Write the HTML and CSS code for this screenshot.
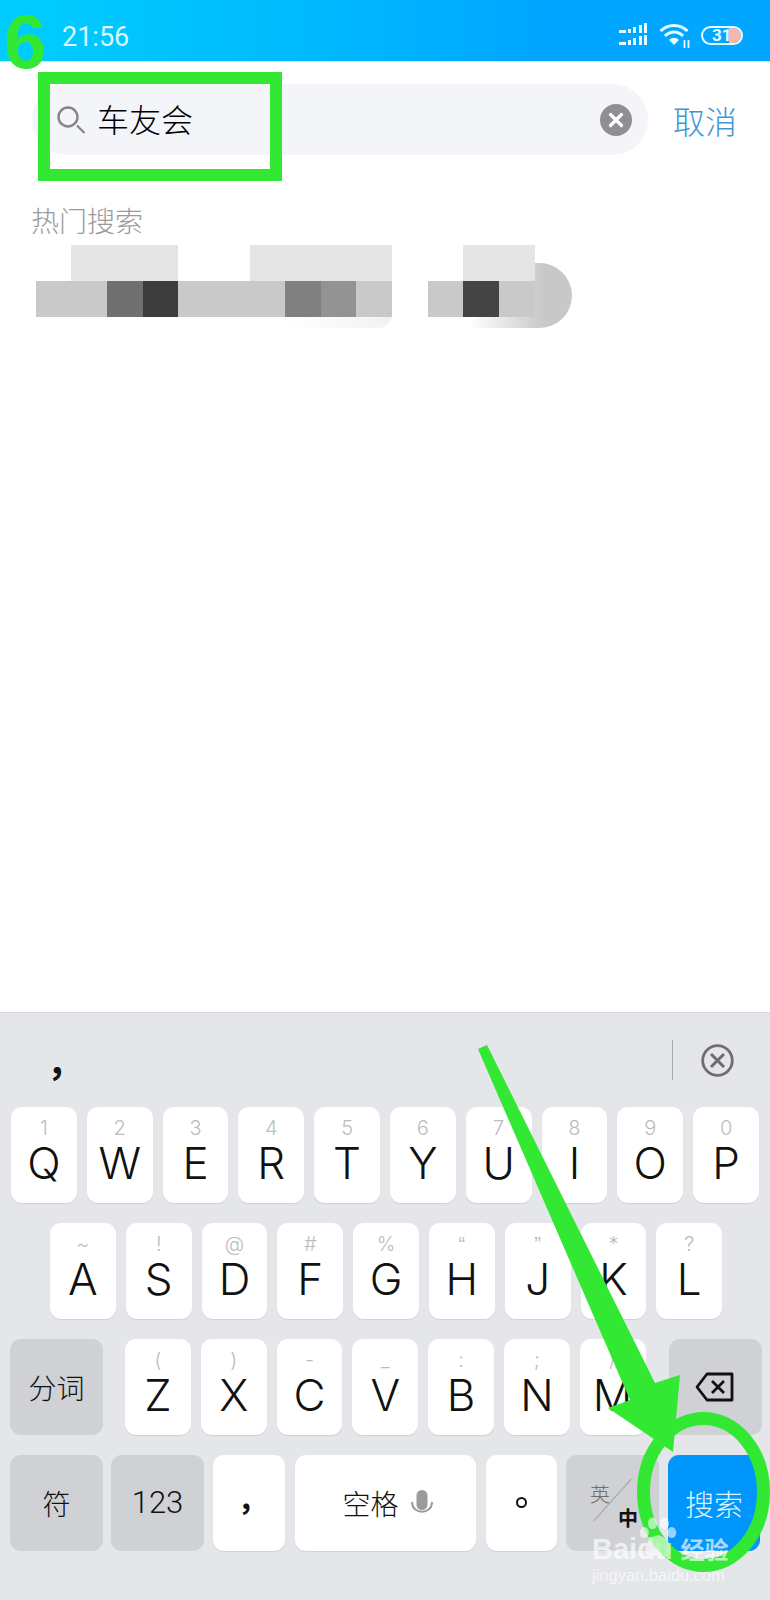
FILE: index.html
```html
<!DOCTYPE html>
<html>
	<head>
		<meta charset="utf-8">
		<meta name="viewport" content="width=device-width, initial-scale=1">
		<link rel="stylesheet" href="styles.css">
		<title>搜索</title>
	</head>
	<body>
		<div class="page">
			<div class="status">
				<span class="time">21:56</span>
				<div class="status-icons">
					<svg width="30" height="24" viewBox="0 0 30 24">
						<g fill="#e8fbff">
							<rect x="0" y="7" width="7" height="3"/><rect x="9" y="6" width="3" height="4"/><rect x="14" y="4" width="3" height="6"/><rect x="20" y="2" width="3" height="8"/><rect x="25" y="0" width="3" height="10"/>
							<rect x="0" y="19" width="7" height="3"/><rect x="9" y="17" width="3" height="5"/><rect x="14" y="15" width="3" height="7"/><rect x="20" y="13" width="3" height="9"/><rect x="25" y="12" width="3" height="10"/>
						</g>
					</svg>
					<svg class="wifi" width="32" height="26" viewBox="0 0 32 26">
						<g fill="none" stroke="#e8fbff" stroke-width="3">
							<path d="M1.500 9C9 1.500 21 1.500 28.500 9"/>
							<path d="M6 14C11 8.500 19 8.500 24 14"/>
						</g>
						<path d="M10 18C13 15 17 15 20 18L15 23Z" fill="#e8fbff"/>
						<path d="M25.500 18V26M29.500 18V26" stroke="#e8fbff" stroke-width="1.800"/>
					</svg>
					<div class="battery">
						<span class="battery-num">31</span>
						<span class="battery-fill"></span>
					</div>
				</div>
			</div>

			<div class="search-row">
				<div class="search-box">
					<svg class="search-ico" width="28" height="28" viewBox="0 0 28 28">
						<circle cx="11" cy="11" r="9.500" fill="none" stroke="#858585" stroke-width="2.400"/>
						<path d="M20 19.500L27.500 27" stroke="#858585" stroke-width="2.200"/>
					</svg>
					<span class="search-text">车友会</span>
					<svg class="clear-ico" width="32" height="32" viewBox="0 0 32 32">
						<circle cx="16" cy="16" r="16" fill="#8e8e93"/>
						<path d="M10.500 10.500L21.500 21.500M21.500 10.500L10.500 21.500" stroke="#fff" stroke-width="3.200" stroke-linecap="round"/>
					</svg>
				</div>
				<span class="cancel">取消</span>
			</div>

			<div class="hot-title">热门搜索</div>
			<div class="hot-area">
				<div class="hot-pill hot-pill-a"></div>
				<div class="hot-pill hot-pill-b"></div>
				<div class="mosaic-row mosaic-top">
					<span class="m w35"></span>
					<span class="m w107 light"></span>
					<span class="m w72"></span>
					<span class="m w142 light"></span>
					<span class="m w71"></span>
					<span class="m w72 light"></span>
				</div>
				<div class="mosaic-row">
					<span class="m w71 mid"></span>
					<span class="m w36 d1"></span>
					<span class="m w35 d2"></span>
					<span class="m w107 mid"></span>
					<span class="m w36 d3"></span>
					<span class="m w35 d4"></span>
					<span class="m w36 mid"></span>
					<span class="m w36"></span>
					<span class="m w35 mid"></span>
					<span class="m w36 d5"></span>
					<span class="m w36 mid"></span>
				</div>
			</div>

			<div class="keyboard">
				<div class="candidates">
					<span class="cand">，</span>
					<span class="cand-line"></span>
					<svg class="cand-close" width="33" height="33" viewBox="0 0 33 33">
						<circle cx="16.500" cy="16.500" r="14.800" fill="none" stroke="#6e6e6e" stroke-width="2.800"/>
						<path d="M10 10L23 23M23 10L10 23" stroke="#6e6e6e" stroke-width="3"/>
					</svg>
				</div>
				<div class="keys">
					<div class="row">
						<div class="key"><i>1</i><b>Q</b></div>
						<div class="key"><i>2</i><b>W</b></div>
						<div class="key"><i>3</i><b>E</b></div>
						<div class="key"><i>4</i><b>R</b></div>
						<div class="key"><i>5</i><b>T</b></div>
						<div class="key"><i>6</i><b>Y</b></div>
						<div class="key"><i>7</i><b>U</b></div>
						<div class="key"><i>8</i><b>I</b></div>
						<div class="key"><i>9</i><b>O</b></div>
						<div class="key"><i>0</i><b>P</b></div>
					</div>
					<div class="row row-home">
						<div class="key"><i>~</i><b>A</b></div>
						<div class="key"><i>!</i><b>S</b></div>
						<div class="key"><i>@</i><b>D</b></div>
						<div class="key"><i>#</i><b>F</b></div>
						<div class="key"><i>%</i><b>G</b></div>
						<div class="key"><i class="q">“</i><b>H</b></div>
						<div class="key"><i class="q">”</i><b>J</b></div>
						<div class="key"><i>*</i><b>K</b></div>
						<div class="key"><i>?</i><b>L</b></div>
					</div>
					<div class="row row-shift">
						<div class="key fn wide shift-l"><span class="fn-text">分词</span></div>
						<div class="key"><i>(</i><b>Z</b></div>
						<div class="key"><i>)</i><b>X</b></div>
						<div class="key"><i>-</i><b>C</b></div>
						<div class="key"><i>_</i><b>V</b></div>
						<div class="key"><i>:</i><b>B</b></div>
						<div class="key"><i>;</i><b>N</b></div>
						<div class="key"><i>/</i><b>M</b></div>
						<div class="key fn wide shift-r">
							<svg width="40" height="30" viewBox="0 0 40 30">
								<path d="M12 2H37V28H12L2 15Z" fill="none" stroke="#111" stroke-width="2.800" stroke-linejoin="round"/>
								<path d="M17 9L29 21M29 9L17 21" stroke="#111" stroke-width="2.800"/>
							</svg>
						</div>
					</div>
					<div class="row row-bottom">
						<div class="key fn wide"><span class="fn-text">符</span></div>
						<div class="key fn wide key-123"><span class="fn-text num">123</span></div>
						<div class="key comma"><span class="punct">，</span></div>
						<div class="key space">
							<span class="fn-text">空格</span>
							<svg width="24" height="28" viewBox="0 0 24 28">
								<rect x="6.500" y="1" width="11" height="20" rx="5.500" fill="#9b9b9b"/>
								<path d="M2 13C2 26 22 26 22 13" fill="none" stroke="#9b9b9b" stroke-width="2"/>
							</svg>
						</div>
						<div class="key comma period"><span class="circle"></span></div>
						<div class="key fn wide lang">
							<span class="lang-en">英</span>
							<span class="lang-line"></span>
							<span class="lang-zh">中</span>
						</div>
						<div class="key go wide">搜索</div>
					</div>
				</div>
			</div>

			<!-- 截图上的标注 -->
			<span class="step">6</span>
			<div class="mark-box"></div>
			<svg class="marks" width="770" height="1600" viewBox="0 0 770 1600">
				<path d="M478 1049L487 1045L655 1383L680 1375L673 1452L608 1408L630 1400Z" fill="#33e833"/>
				<ellipse cx="703.500" cy="1492" rx="60" ry="73.500" fill="none" stroke="#33e833" stroke-width="13"/>
			</svg>
			<div class="wm">
				<svg class="wm-paw" width="40" height="42" viewBox="0 0 42 46">
					<g fill="#fff" fill-opacity=".9">
						<ellipse cx="6" cy="17" rx="5" ry="6"/>
						<ellipse cx="15" cy="7" rx="5" ry="6.500"/>
						<ellipse cx="28" cy="7" rx="5" ry="6.500"/>
						<ellipse cx="36" cy="17" rx="5" ry="6"/>
						<path d="M21 20C29 20 35 30 35 37C35 45 27 42 21 42C15 42 7 45 7 37C7 30 13 20 21 20Z"/>
					</g>
				</svg>
				<div class="wm-line"><span class="wm-bai">Bai</span><span class="wm-du">du</span><span class="wm-cn">经验</span></div>
				<div class="wm-url">jingyan.baidu.com</div>
			</div>
		</div>
	</body>
</html>
```

FILE: styles.css
```css
*{
	box-sizing: border-box;
}
html,body{
	margin: 0;
	padding: 0;
	background: #fff;
}
.page{
	position: relative;
	width: 770px;
	height: 1600px;
	overflow: hidden;
	display: flex;
	flex-direction: column;
	font-family: "Liberation Sans", "Noto Sans CJK SC", sans-serif;
}

/* status bar */
.status{
	height: 62px;
	flex: none;
	display: flex;
	align-items: center;
	justify-content: space-between;
	padding: 9px 27px 0 62px;
	background: linear-gradient(90deg, #00cdfe 0%, #00baff 40%, #00a6ff 70%, #00a6ff 100%);
	border-bottom: 1px solid #bfeaff;
}
.time{
	color: #d9f8ff;
	font-family: Roboto, sans-serif;
	font-size: 27px;
	margin-top: 3px;
}
.status-icons{
	display: flex;
	align-items: center;
	gap: 10px;
}
.battery{
	position: relative;
	width: 42px;
	height: 19px;
	border: 2px solid #e8fbff;
	border-radius: 10px;
	overflow: hidden;
	color: #e8fbff;
	font: bold 17px/15px Roboto, sans-serif;
}
.battery-num{
	display: block;
	padding-left: 9px;
}
.battery-fill{
	position: absolute;
	top: 0;
	right: 0;
	width: 12px;
	height: 15px;
	background: #f2b9ae;
}

/* search */
.search-row{
	display: flex;
	align-items: center;
	margin-top: 22px;
	padding-left: 32px;
	height: 71px;
	flex: none;
}
.search-box{
	width: 616px;
	height: 71px;
	display: flex;
	align-items: center;
	border-radius: 36px;
	background: #f4f5f9;
	padding: 0 16px 0 25px;
}
.search-text{
	margin-left: 12px;
	margin-top: -4px;
	font-size: 32px;
	font-weight: 300;
	color: #000;
	flex: 1;
}
.cancel{
	margin-left: 25px;
	font-size: 32px;
	font-weight: 300;
	color: #3f97d8;
}
.hot-title{
	margin-top: 53px;
	padding-left: 31px;
	font-size: 28px;
	font-weight: 300;
	line-height: 30px;
	color: #9a9a9e;
	flex: none;
}
.hot-area{
	position: relative;
	flex: none;
	height: 83px;
	margin-top: 7px;
	padding-left: 36px;
}
.hot-pill{
	position: absolute;
	top: 18px;
	height: 65px;
	border-radius: 0 33px 33px 0;
}
.hot-pill-a{
	left: 260px;
	width: 132px;
	background: linear-gradient(90deg, #fff 20%, #f2f2f2 100%);
	border-radius: 0 0 14px 0;
}
.hot-pill-b{
	left: 436px;
	width: 136px;
	background: linear-gradient(90deg, #fff 0%, #fff 25%, #c8c8c8 80%);
}
.mosaic-row{
	position: relative;
	display: flex;
	height: 36px;
}
.m{
	display: block;
	height: 36px;
}
.w35{ width: 35px; }
.w36{ width: 36px; }
.w71{ width: 71px; }
.w72{ width: 72px; }
.w107{ width: 107px; }
.w142{ width: 142px; }
.light{ background: #e5e5e5; }
.mid{ background: #c9c9c9; }
.d1{ background: #707070; }
.d2{ background: #3c3c3c; }
.d3{ background: #808080; }
.d4{ background: #939393; }
.d5{ background: #444; }

/* keyboard */
.keyboard{
	margin-top: auto;
	height: 588px;
	flex: none;
	background: #e4e6ea;
	border-top: 1px solid #d8dade;
}
.candidates{
	height: 94px;
	display: flex;
	align-items: center;
	position: relative;
}
.cand{
	margin-left: 47px;
	margin-top: 8px;
	font-size: 36px;
	font-weight: bold;
	color: #111;
	line-height: 40px;
}
.cand-line{
	width: 1px;
	height: 40px;
	margin-left: auto;
	background: #a9abae;
}
.cand-close{
	margin: 0 36px 0 28px;
}
.keys{
	display: flex;
	flex-direction: column;
	gap: 20.500px;
}
.row{
	display: flex;
	height: 95.500px;
	gap: 10px;
	padding-left: 11px;
}
.row-home{
	padding-left: 50px;
}
.row-shift{
	padding-left: 10px;
}
.row-bottom{
	padding-left: 10px;
	gap: 9px;
}
.key{
	position: relative;
	width: 65.800px;
	flex: none;
	background: #fff;
	border-radius: 11px;
	box-shadow: 0 1px 1px #cfd1d4;
	display: flex;
	flex-direction: column;
	align-items: center;
	color: #111;
}
.key i{
	font-style: normal;
	font-family: Inter, sans-serif;
	font-weight: 300;
	font-size: 20px;
	line-height: 20px;
	margin-top: 11px;
	color: #bcbcbc;
}
.key i.q{
	font-family: "Liberation Sans", sans-serif;
}
.key b{
	font-weight: 300;
	font-family: Inter, sans-serif;
	font-size: 44px;
	line-height: 46px;
	margin-top: 2px;
}
.fn{
	background: #cfd1d5;
	box-shadow: none;
}
.wide{
	width: 93px;
	justify-content: center;
}
.shift-l{
	margin-right: 12px;
}
.shift-r{
	margin-left: 13px;
}
.key-123{
	margin-left: -1px;
}
.fn-text{
	font-size: 28px;
	font-weight: 300;
	color: #111;
}
.num{
	font-family: Roboto, sans-serif;
	font-size: 31px;
}
.comma{
	width: 71.500px;
	justify-content: center;
}
.space{
	width: 181px;
	flex-direction: row;
	justify-content: center;
	gap: 11px;
	padding-left: 6px;
	margin-left: 1px;
}
.punct{
	font-size: 30px;
	font-weight: bold;
	line-height: 32px;
	margin-left: 8px;
	margin-top: -5px;
}
.period{
	margin-left: 1px;
}
.circle{
	width: 11px;
	height: 11px;
	border: 2px solid #111;
	border-radius: 50%;
}
.lang span{
	position: absolute;
}
.lang-en{
	left: 24px;
	top: 24px;
	font-size: 20px;
	font-weight: 300;
	color: #6d6d6d;
}
.lang-line{
	left: 46px;
	top: 17px;
	width: 1px;
	height: 56px;
	background: #a5a5a5;
	transform: rotate(42deg);
}
.lang-zh{
	left: 52px;
	top: 48px;
	font-size: 20px;
	font-weight: bold;
	color: #111;
}
.go{
	background: #0096fb;
	box-shadow: none;
	color: #dff4ff;
	font-size: 29px;
	font-weight: 300;
	width: 92px;
}

/* annotations on top of the screenshot */
.step{
	position: absolute;
	left: 4px;
	top: -1px;
	color: #33e833;
	font-size: 76px;
	line-height: 86px;
	font-weight: bold;
}
.mark-box{
	position: absolute;
	left: 38px;
	top: 72px;
	width: 244px;
	height: 109px;
	border: 12px solid #33e833;
}
.marks{
	position: absolute;
	left: 0;
	top: 0;
}
.search-ico{
	flex: none;
}
.wm{
	position: absolute;
	left: 592px;
	top: 1517px;
	width: 178px;
	height: 70px;
	color: #fff;
	opacity: .65;
}
.wm-paw{
	position: absolute;
	left: 46px;
	top: 0;
}
.wm-line{
	position: absolute;
	left: 0;
	top: 16px;
	white-space: nowrap;
	font-size: 29px;
	font-weight: bold;
	line-height: 32px;
}
.wm-cn{
	margin-left: 8px;
	font-size: 24px;
}
.wm-url{
	position: absolute;
	left: 0;
	top: 49px;
	font-size: 16.500px;
	white-space: nowrap;
}
```
